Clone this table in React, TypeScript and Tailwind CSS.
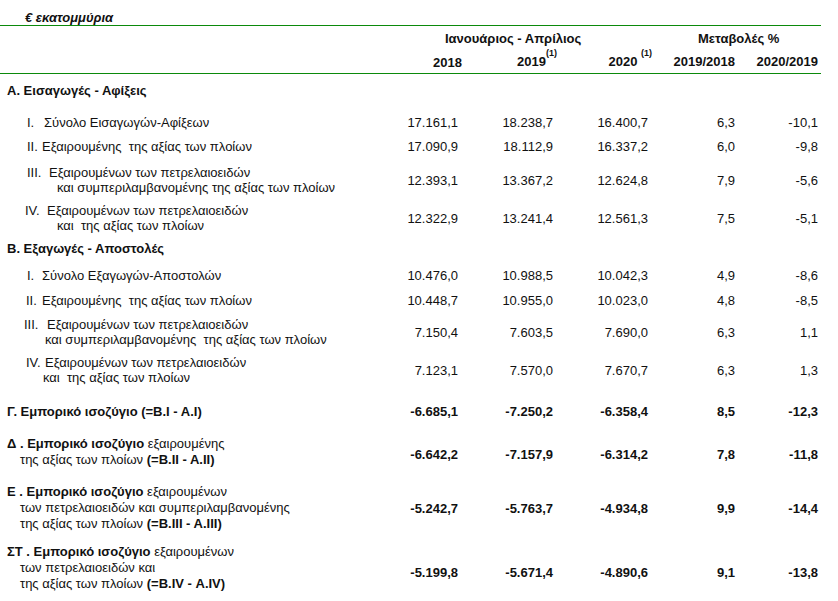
import React from 'react';

const GRID = 'grid grid-cols-[400px_58px_95px_95px_87px_83px] items-center';

type Item = {
  lines: { pl: string; num?: string; numW?: string; text: string }[];
  values: string[];
  mt: string;
};

const Numbers: React.FC<{ values: string[]; bold?: boolean; nudge?: string }> = ({ values, bold, nudge = '' }) => (
  <>
    {values.map((v, i) => (
      <div key={i} className={`text-right ${nudge} ${bold ? 'font-bold' : ''}`}>{v}</div>
    ))}
  </>
);

const ItemRow: React.FC<{ item: Item }> = ({ item }) => (
  <div className={`${GRID} ${item.mt} leading-[15px]`}>
    <div>
      {item.lines.map((l, i) => (
        <div key={i} className={`${l.pl} whitespace-pre`}>
          {l.num && <span className={`inline-block ${l.numW}`}>{l.num}</span>}
          {l.text}
        </div>
      ))}
    </div>
    <Numbers values={item.values} />
  </div>
);

const sectionA: Item[] = [
  { lines: [{ pl: 'pl-[27px]', num: 'I.', numW: 'w-[17px]', text: 'Σύνολο Εισαγωγών-Αφίξεων' }], values: ['17.161,1', '18.238,7', '16.400,7', '6,3', '-10,1'], mt: 'mt-[17px]' },
  { lines: [{ pl: 'pl-[27px]', num: 'II.', numW: 'w-[15px]', text: 'Εξαιρουμένης  της αξίας των πλοίων' }], values: ['17.090,9', '18.112,9', '16.337,2', '6,0', '-9,8'], mt: 'mt-[9px]' },
  {
    lines: [
      { pl: 'pl-[27px]', num: 'III.', numW: 'w-[22px]', text: 'Εξαιρουμένων των πετρελαιοειδών' },
      { pl: 'pl-[57px]', text: 'και συμπεριλαμβανομένης της αξίας των πλοίων' },
    ],
    values: ['12.393,1', '13.367,2', '12.624,8', '7,9', '-5,6'],
    mt: 'mt-[11px]',
  },
  {
    lines: [
      { pl: 'pl-[25px]', num: 'IV.', numW: 'w-[22px]', text: 'Εξαιρουμένων των πετρελαιοειδών' },
      { pl: 'pl-[57px]', text: 'και  της αξίας των πλοίων' },
    ],
    values: ['12.322,9', '13.241,4', '12.561,3', '7,5', '-5,1'],
    mt: 'mt-[8px]',
  },
];

const sectionB: Item[] = [
  { lines: [{ pl: 'pl-[27px]', num: 'I.', numW: 'w-[15px]', text: 'Σύνολο Εξαγωγών-Αποστολών' }], values: ['10.476,0', '10.988,5', '10.042,3', '4,9', '-8,6'], mt: 'mt-[12px]' },
  { lines: [{ pl: 'pl-[26px]', num: 'II.', numW: 'w-[16px]', text: 'Εξαιρουμένης  της αξίας των πλοίων' }], values: ['10.448,7', '10.955,0', '10.023,0', '4,8', '-8,5'], mt: 'mt-[10px]' },
  {
    lines: [
      { pl: 'pl-[24px]', num: 'III.', numW: 'w-[23px]', text: 'Εξαιρουμένων των πετρελαιοειδών' },
      { pl: 'pl-[45px]', text: 'και συμπεριλαμβανομένης  της αξίας των πλοίων' },
    ],
    values: ['7.150,4', '7.603,5', '7.690,0', '6,3', '1,1'],
    mt: 'mt-[9px]',
  },
  {
    lines: [
      { pl: 'pl-[26px]', num: 'IV.', numW: 'w-[19px]', text: 'Εξαιρουμένων των πετρελαιοειδών' },
      { pl: 'pl-[43px]', text: 'και  της αξίας των πλοίων' },
    ],
    values: ['7.123,1', '7.570,0', '7.670,7', '6,3', '1,3'],
    mt: 'mt-[8px]',
  },
];

export default function App() {
  return (
    <div className="w-[838px] h-[601px] bg-white text-[13px] text-[#111] font-['Liberation_Sans',Arial,sans-serif]">
      <div className="w-[821px]">
        {/* title */}
        <div className="h-[26px] border-b border-[#0b8a0b] pl-[25px] pt-[10px] leading-[15px] font-bold italic">
          € εκατομμύρια
        </div>

        {/* column headings */}
        <div className="border-b border-[#0b8a0b] font-bold">
          <div className={`${GRID} h-[24px]`}>
            <div />
            <div className="col-span-3 pl-[45px] pt-[2px]">Ιανουάριος - Απρίλιος</div>
            <div className="col-span-2 pl-[50px] pt-[2px]">Μεταβολές %</div>
          </div>
          <div className={`${GRID} h-[23px]`}>
            <div />
            <div className="text-right -mr-[4px] pt-[2px]">2018</div>
            <div className="text-right -mr-[4px]">
              2019<sup className="text-[9px] align-[5px]">(1)</sup>
            </div>
            <div className="text-right -mr-[4px]">
              2020 <sup className="text-[9px] align-[5px]">(1)</sup>
            </div>
            <div className="text-right">2019/2018</div>
            <div className="text-right">2020/2019</div>
          </div>
        </div>

        {/* A */}
        <div className="mt-[9px] pl-[7px] font-bold leading-[15px]">Α. Εισαγωγές - Αφίξεις</div>
        {sectionA.map((it, i) => (
          <ItemRow key={i} item={it} />
        ))}

        {/* B */}
        <div className="mt-[8px] pl-[7px] font-bold leading-[15px]">Β. Εξαγωγές - Αποστολές</div>
        {sectionB.map((it, i) => (
          <ItemRow key={i} item={it} />
        ))}

        {/* balances */}
        <div className={`${GRID} mt-[19px] leading-[16px]`}>
          <div className="pl-[7px] font-bold">Γ. Εμπορικό ισοζύγιο (=Β.Ι - Α.Ι)</div>
          <Numbers bold values={['-6.685,1', '-7.250,2', '-6.358,4', '8,5', '-12,3']} />
        </div>

        <div className={`${GRID} mt-[16px] leading-[16px]`}>
          <div className="whitespace-pre">
            <div className="pl-[7px]">
              <span className="font-bold">Δ . Εμπορικό ισοζύγιο</span> εξαιρουμένης
            </div>
            <div className="pl-[20px]">
              της αξίας των πλοίων <span className="font-bold">(=Β.ΙΙ - Α.ΙΙ)</span>
            </div>
          </div>
          <Numbers bold nudge="pt-[6px]" values={['-6.642,2', '-7.157,9', '-6.314,2', '7,8', '-11,8']} />
        </div>

        <div className={`${GRID} mt-[16px] leading-[16px]`}>
          <div className="whitespace-pre">
            <div className="pl-[7px]">
              <span className="font-bold">Ε . Εμπορικό ισοζύγιο</span> εξαιρουμένων
            </div>
            <div className="pl-[20px]">των πετρελαιοειδών και συμπεριλαμβανομένης</div>
            <div className="pl-[20px]">
              της αξίας των πλοίων <span className="font-bold">(=Β.ΙΙΙ - Α.ΙΙΙ)</span>
            </div>
          </div>
          <Numbers bold nudge="pt-[2px]" values={['-5.242,7', '-5.763,7', '-4.934,8', '9,9', '-14,4']} />
        </div>

        <div className={`${GRID} mt-[12px] leading-[16px]`}>
          <div className="whitespace-pre">
            <div className="pl-[7px]">
              <span className="font-bold">ΣΤ . Εμπορικό ισοζύγιο</span> εξαιρουμένων
            </div>
            <div className="pl-[20px]">των πετρελαιοειδών και</div>
            <div className="pl-[20px]">
              της αξίας των πλοίων <span className="font-bold">(=Β.ΙV - Α.ΙV)</span>
            </div>
          </div>
          <Numbers bold nudge="pt-[10px]" values={['-5.199,8', '-5.671,4', '-4.890,6', '9,1', '-13,8']} />
        </div>
      </div>
    </div>
  );
}
